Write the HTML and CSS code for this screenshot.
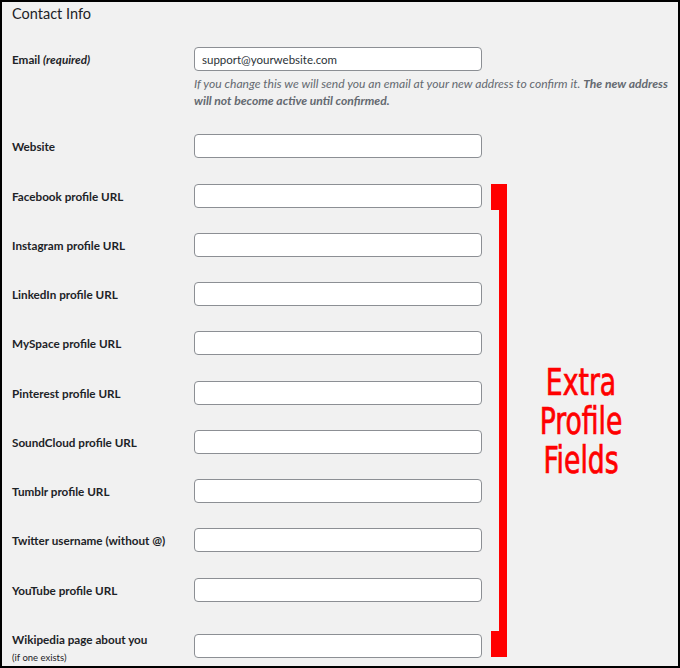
FILE: index.html
```html
<!DOCTYPE html>
<html lang="en">
<head>
<meta charset="UTF-8">
<meta name="viewport" content="width=device-width, initial-scale=1.0">
<title>Contact Info</title>
<link rel="stylesheet" href="styles.css">
</head>
<body>
<div class="page">
    <h2 class="section-title">Contact Info</h2>

    <form class="profile-form">
        <div class="row">
            <label class="row-label" for="email">Email <span class="required">(required)</span></label>
            <div class="row-field">
                <input type="text" id="email" name="email" value="support@yourwebsite.com">
                <p class="description">If you change this we will send you an email at your new address to confirm it. <strong>The new address will not become active until confirmed.</strong></p>
            </div>
        </div>
        <div class="row">
            <label class="row-label" for="url">Website</label>
            <div class="row-field"><input type="text" id="url" name="url"></div>
        </div>
        <div class="row">
            <label class="row-label" for="facebook">Facebook profile URL</label>
            <div class="row-field"><input type="text" id="facebook" name="facebook"></div>
        </div>
        <div class="row">
            <label class="row-label" for="instagram">Instagram profile URL</label>
            <div class="row-field"><input type="text" id="instagram" name="instagram"></div>
        </div>
        <div class="row">
            <label class="row-label" for="linkedin">LinkedIn profile URL</label>
            <div class="row-field"><input type="text" id="linkedin" name="linkedin"></div>
        </div>
        <div class="row">
            <label class="row-label" for="myspace">MySpace profile URL</label>
            <div class="row-field"><input type="text" id="myspace" name="myspace"></div>
        </div>
        <div class="row">
            <label class="row-label" for="pinterest">Pinterest profile URL</label>
            <div class="row-field"><input type="text" id="pinterest" name="pinterest"></div>
        </div>
        <div class="row">
            <label class="row-label" for="soundcloud">SoundCloud profile URL</label>
            <div class="row-field"><input type="text" id="soundcloud" name="soundcloud"></div>
        </div>
        <div class="row">
            <label class="row-label" for="tumblr">Tumblr profile URL</label>
            <div class="row-field"><input type="text" id="tumblr" name="tumblr"></div>
        </div>
        <div class="row">
            <label class="row-label" for="twitter">Twitter username (without @)</label>
            <div class="row-field"><input type="text" id="twitter" name="twitter"></div>
        </div>
        <div class="row">
            <label class="row-label" for="youtube">YouTube profile URL</label>
            <div class="row-field"><input type="text" id="youtube" name="youtube"></div>
        </div>
        <div class="row row-tall">
            <label class="row-label" for="wikipedia">Wikipedia page about you<small>(if one exists)</small></label>
            <div class="row-field"><input type="text" id="wikipedia" name="wikipedia"></div>
        </div>
    </form>

    <!-- annotation over the screenshot -->
    <svg class="bracket" width="16" height="473" viewBox="0 0 16 473">
        <path d="M0 0 H16 V473 H0 V447 H8 V26 H0 Z" fill="#ff0000"/>
    </svg>
    <div class="note">Extra<br>Profile<br>Fields</div>
</div>
</body>
</html>
```

FILE: styles.css
```css
body {
    margin: 0;
    font-family: Lato, "Open Sans", sans-serif;
    color: #1d2327;
}

.page {
    position: relative;
    width: 680px;
    height: 668px;
    box-sizing: border-box;
    border: 2px solid #000000;
    background-color: #f1f1f1;
    overflow: hidden;
}

.section-title {
    margin: 0 0 11px;
    padding: 2px 0 0 10px;
    font-size: 14.5px;
    font-weight: normal;
    line-height: 20px;
}

.profile-form {
    margin: 0;
    padding-left: 10px;
}

.row {
    display: flex;
    align-items: flex-start;
    padding: 12px 0 13.25px;
}

.row-tall {
    align-items: center;
}

.row-label {
    flex: none;
    width: 182px;
    font-size: 11.7px;
    font-weight: bold;
    line-height: 25px;
    margin-bottom: -1px;
}

.row-label .required {
    font-style: italic;
}

.row-label small {
    display: block;
    margin-top: -1px;
    font-size: 9.5px;
    font-weight: normal;
    line-height: 14px;
}

.row-tall .row-field {
    padding-top: 1px;
}

.row-field {
    flex: 1;
    padding-right: 1px;
}

input[type="text"] {
    display: block;
    width: 288px;
    height: 24px;
    box-sizing: border-box;
    margin: 0;
    padding: 0 7px;
    border: 1px solid #8c8f94;
    border-radius: 4px;
    background-color: #ffffff;
    font-family: Lato, "Open Sans", sans-serif;
    font-size: 11.5px;
    color: #2c3338;
}

.description {
    margin: 4px 0 0;
    font-size: 12.1px;
    font-style: italic;
    line-height: 17px;
    color: #646970;
}

.description strong {
    font-weight: bold;
}

.bracket {
    position: absolute;
    left: 489px;
    top: 182px;
}

.note {
    position: absolute;
    left: 519px;
    top: 361px;
    width: 120px;
    text-align: center;
    font-family: "DejaVu Sans Condensed", "DejaVu Sans", sans-serif;
    font-stretch: condensed;
    font-size: 37px;
    line-height: 39px;
    color: #ff0000;
    -webkit-text-stroke: 0.7px #ff0000;
    transform: scaleX(0.8);
}
```
